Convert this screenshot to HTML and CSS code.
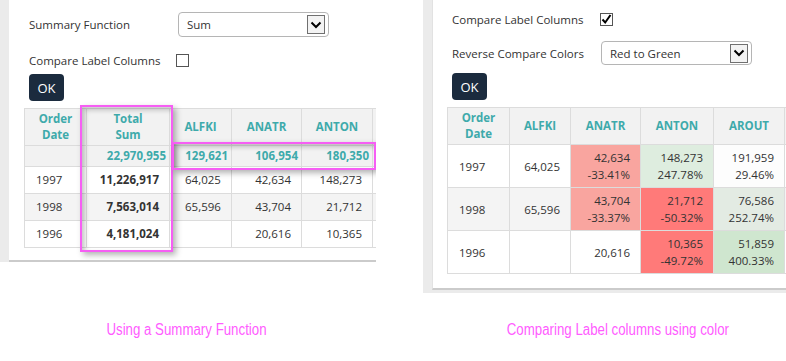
FILE: index.html
```html
<!DOCTYPE html>
<html lang="en">
<head>
  <meta charset="UTF-8" />
  <title>Pivot options</title>
  <link rel="stylesheet" href="styles.css">
</head>
<body>
  <div class="shots">
    <div class="shot shot-left">
      <div class="panel">
        <div class="form-row row-sum">
          <span class="label">Summary Function</span>
          <div class="select"><span class="value">Sum</span><span class="arrow"><svg width="12" height="8" viewBox="0 0 12 8"><path d="M1.5 1.5 L6 6 L10.5 1.5" fill="none" stroke="#000" stroke-width="2"/></svg></span></div>
        </div>
        <div class="form-row row-compare">
          <span class="label">Compare Label Columns</span>
          <span class="check"></span>
        </div>
        <button class="ok ok-left">OK</button>
        <table class="grid grid-left">
          <colgroup>
            <col style="width:62px"><col style="width:83px"><col style="width:62px"><col style="width:70px"><col style="width:71px"><col style="width:70px">
          </colgroup>
          <thead>
            <tr><th>Order Date</th><th>Total<br>Sum</th><th>ALFKI</th><th>ANATR</th><th>ANTON</th><th></th></tr>
          </thead>
          <tbody>
            <tr class="totals"><td></td><td class="num">22,970,955</td><td class="num">129,621</td><td class="num">106,954</td><td class="num">180,350</td><td></td></tr>
            <tr><td>1997</td><td class="num strong">11,226,917</td><td>64,025</td><td class="num">42,634</td><td class="num">148,273</td><td></td></tr>
            <tr class="alt"><td>1998</td><td class="num strong">7,563,014</td><td>65,596</td><td class="num">43,704</td><td class="num">21,712</td><td></td></tr>
            <tr><td>1996</td><td class="num strong">4,181,024</td><td></td><td class="num">20,616</td><td class="num">10,365</td><td></td></tr>
          </tbody>
        </table>
        <div class="mark mark-col"></div>
        <div class="mark mark-row"></div>
      </div>
    </div>

    <div class="shot shot-right">
      <div class="panel">
        <div class="form-row row-compare-r">
          <span class="label">Compare Label Columns</span>
          <span class="check"><svg width="11" height="11" viewBox="0 0 11 11"><path d="M1.5 5.5 L4.2 8.5 L9.5 1" fill="none" stroke="#000" stroke-width="2"/></svg></span>
        </div>
        <div class="form-row row-reverse">
          <span class="label">Reverse Compare Colors</span>
          <div class="select"><span class="value">Red to Green</span><span class="arrow"><svg width="12" height="8" viewBox="0 0 12 8"><path d="M1.5 1.5 L6 6 L10.5 1.5" fill="none" stroke="#000" stroke-width="2"/></svg></span></div>
        </div>
        <button class="ok ok-right">OK</button>
        <table class="grid grid-right">
          <colgroup>
            <col style="width:62px"><col style="width:61px"><col style="width:70px"><col style="width:73px"><col style="width:71px"><col style="width:70px">
          </colgroup>
          <thead>
            <tr><th>Order Date</th><th>ALFKI</th><th>ANATR</th><th>ANTON</th><th>AROUT</th><th></th></tr>
          </thead>
          <tbody>
            <tr><td>1997</td><td class="num">64,025</td><td class="num red-1">42,634<br>-33.41%</td><td class="num green-1">148,273<br>247.78%</td><td class="num green-0">191,959<br>29.46%</td><td></td></tr>
            <tr class="alt"><td>1998</td><td class="num">65,596</td><td class="num red-1">43,704<br>-33.37%</td><td class="num red-2">21,712<br>-50.32%</td><td class="num green-2">76,586<br>252.74%</td><td></td></tr>
            <tr><td>1996</td><td></td><td class="num">20,616</td><td class="num red-2">10,365<br>-49.72%</td><td class="num green-3">51,859<br>400.33%</td><td></td></tr>
          </tbody>
        </table>
      </div>
    </div>
  </div>

  <div class="captions">
    <p class="caption caption-left"><span>Using a Summary Function</span></p>
    <p class="caption caption-right"><span>Comparing Label columns using color</span></p>
  </div>
</body>
</html>
```

FILE: styles.css
```css
body {
  margin:0;
  background:#fff;
  font-family:"Open Sans", "Noto Sans", sans-serif;
  font-size:11.5px;
  color:#333;
}
.shots {
  display:flex;
  align-items:flex-start;
}
.shot {
  background:#ebebeb;
  padding-left:9px;
}
.shot-left {
  width:367px;
  height:262px;
}
.shot-right {
  margin-left:47px;
  width:354px;
  height:293px;
}
.panel {
  position:relative;
  background:#fff;
  overflow:hidden;
  padding-left:15px;
  border-bottom:2px solid #cbcbcb;
  box-sizing:border-box;
}
.shot-left .panel {
  height:262px;
  padding-top:12px;
}
.shot-right .panel {
  height:290px;
  padding-top:7px;
  border-left:1px solid #e2e2e2;
  padding-left:14px;
}
.form-row {
  display:flex;
  align-items:center;
  height:25px;
  padding-left:5px;
}
.label {
  width:149px;
  flex:none;
}
.row-compare { margin-top:11px; }
.row-compare .check { margin-left:-2px; }
.row-reverse { margin-top:9px; height:24px; }
.row-compare-r .check { margin-left:-1px; }
.select {
  display:flex;
  align-items:center;
  justify-content:space-between;
  width:151px;
  height:25px;
  box-sizing:border-box;
  border:1px solid #b5b5b5;
  border-radius:4px;
  padding:0 3px 0 8px;
}
.row-reverse .select { height:24px; }
.arrow {
  display:flex;
  align-items:center;
  justify-content:center;
  width:18px;
  height:19px;
  box-sizing:border-box;
  border:1px solid #707070;
  background:#f3f3f3;
}
.check {
  display:flex;
  align-items:center;
  justify-content:center;
  width:13px;
  height:13px;
  box-sizing:border-box;
  border:1px solid #555;
  background:#fff;
}
.ok {
  display:block;
  margin-left:5px;
  width:35px;
  height:27px;
  padding:0;
  border:0;
  border-radius:4px;
  background:#1b2b3e;
  color:#fff;
  font-family:inherit;
  font-size:13px;
}
.ok-left { margin-top:1px; }
.ok-right { margin-top:8px; }
.grid {
  border-collapse:collapse;
  table-layout:fixed;
  width:418px;
  margin-top:7px;
}
.grid-right { width:407px; }
.grid th,
.grid td {
  border:1px solid #dcdcdc;
  padding:0 10px;
  line-height:16px;
}
.grid th {
  background:#f2f2f2;
  color:#3eaaab;
  font-weight:bold;
  text-align:center;
  height:36px;
  padding:0 6px;
}
.grid td { white-space:nowrap; }
.grid-left td { height:26px; }
.grid-left td:first-child { padding-left:11px; }
.grid-left td:nth-child(3) { padding-left:15px; }
.grid-left tr.totals td {
  background:#f2f2f2;
  color:#3eaaab;
  font-weight:bold;
  height:20px;
  padding-right:3px;
}
.grid-right td {
  height:42px;
  line-height:17px;
}
.grid-right td:first-child { padding-left:11px; }
.num { text-align:right; }
.strong { font-weight:bold; }
.grid tr.alt td { background:#f4f4f4; }
.grid tr td.red-1 { background:#f9a59f; }
.grid tr td.red-2 { background:#ff7a79; }
.grid tr td.green-0 { background:#fdfdfd; }
.grid tr td.green-1 { background:#deeddf; }
.grid tr td.green-2 { background:#e3ebe3; }
.grid tr td.green-3 { background:#cfe6cf; }
.mark {
  position:absolute;
  border:2px solid #f65ef4;
  box-sizing:border-box;
  box-shadow:3px 3px 6px rgba(0,0,0,.3), inset 3px 3px 5px rgba(0,0,0,.22);
}
.mark-col {
  left:71px;
  top:105px;
  width:93px;
  height:147px;
}
.mark-row {
  left:163px;
  top:142px;
  width:204px;
  height:28px;
}
.captions {
  display:flex;
  margin-top:28px;
}
.caption {
  flex:none;
  margin:0;
  font-family:"Liberation Sans", Arial, sans-serif;
  font-size:16px;
  line-height:18px;
  color:#ff5cff;
  text-align:center;
}
.caption span {
  display:inline-block;
  transform:scaleX(.83);
}
.caption-left { width:372px; }
.caption-right { margin-left:78px; width:336px; }
```
